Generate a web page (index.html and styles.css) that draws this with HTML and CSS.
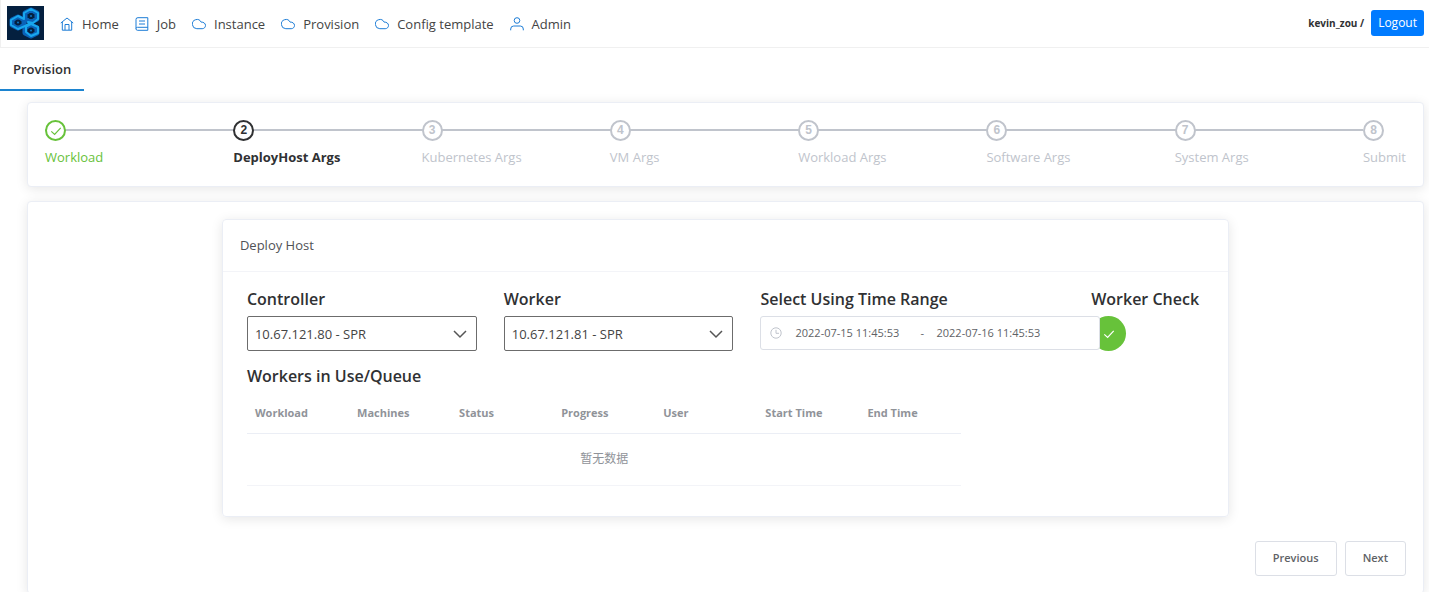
FILE: index.html
```html
<!DOCTYPE html>
<html lang="en">
<head>
<meta charset="utf-8">
<title>Provision</title>
<link rel="stylesheet" href="styles.css">
</head>
<body>
<svg class="defs" width="0" height="0" aria-hidden="true">
  <symbol id="cloud" viewBox="0 0 14 14"><path d="M4.800 11.700a4.600 4.600 0 1 1 4.300-6.600c2.400-.2 4.400 1.300 4.400 3.300 0 1.900-1.400 3.300-3.300 3.300z"/></symbol>
  <symbol id="tick" viewBox="0 0 14 14"><path d="M1.500 7.400 5.400 11 12.500 3.400"/></symbol>
</svg>
<header class="topbar">
  <a class="logo" href="#" aria-label="Start">
    <svg viewBox="0 0 37 34">
      <rect width="37" height="34" fill="#04203f"/>
      <g fill="none" stroke="#0a62b8" stroke-width="5" stroke-linejoin="round">
        <path d="M24 4l6 3v6l-6 3-6-3V7z"/><path d="M11 11l6 3v5l-6 3-6-3v-5z"/><path d="M24 19l6 3v5l-6 3-6-3v-5z"/>
      </g>
      <g fill="none" stroke="#18a8ee" stroke-width="2" stroke-linecap="round" stroke-linejoin="round">
        <path d="M17 12V7l7-4 7 4v6l-5 4-5-1"/><path d="M17 13l-6-3-7 4v5l7 4 7-3 5-3"/><path d="M19 20v6l5 4 7-3v-6l-7-3-4 2"/>
      </g>
      <g fill="#04203f"><circle cx="24" cy="10" r="3"/><circle cx="11" cy="16.500" r="3"/><circle cx="24" cy="24.500" r="3"/></g>
      <g fill="#0e77c4"><circle cx="24" cy="10" r="1"/><circle cx="11" cy="16.500" r="1"/><circle cx="24" cy="24.500" r="1"/></g>
    </svg>
  </a>
  <nav class="nav">
    <a href="#"><svg class="icon" viewBox="0 0 14 14"><path d="M.8 6 7 1l6.200 5M2.300 5v8.200h9.400V5M5 13V7.500h4V13"/></svg>Home</a>
    <a href="#"><svg class="icon" viewBox="0 0 14 14"><path d="M3 .7h9.800v12.600H2.500a1.500 1.500 0 0 1-1.500-1.500V2.500A1.800 1.800 0 0 1 3 .7zM1 11.500a1.500 1.500 0 0 1 1.500-1.200h10.300M4 4h6M4 7h6"/></svg>Job</a>
    <a href="#"><svg class="icon"><use href="#cloud"/></svg>Instance</a>
    <a href="#"><svg class="icon"><use href="#cloud"/></svg>Provision</a>
    <a href="#"><svg class="icon"><use href="#cloud"/></svg>Config template</a>
    <a href="#"><svg class="icon" viewBox="0 0 14 14"><circle cx="7" cy="3.500" r="2.800"/><path d="M.7 13.300V12a3 3 0 0 1 3-3h6.600a3 3 0 0 1 3 3v1.300"/></svg>Admin</a>
  </nav>
  <span class="user">kevin_zou /</span>
  <button class="logout" type="button">Logout</button>
</header>
<div class="tabs"><a class="tab" href="#">Provision</a></div>
<main class="content">
  <section class="panel">
    <ol class="steps">
      <li class="step done"><span class="dot"><svg class="tick"><use href="#tick"/></svg></span><span class="name">Workload</span></li>
      <li class="step current"><span class="dot">2</span><span class="name">DeployHost Args</span></li>
      <li class="step"><span class="dot">3</span><span class="name">Kubernetes Args</span></li>
      <li class="step"><span class="dot">4</span><span class="name">VM Args</span></li>
      <li class="step"><span class="dot">5</span><span class="name">Workload Args</span></li>
      <li class="step"><span class="dot">6</span><span class="name">Software Args</span></li>
      <li class="step"><span class="dot">7</span><span class="name">System Args</span></li>
      <li class="step"><span class="dot">8</span><span class="name">Submit</span></li>
    </ol>
  </section>
  <section class="panel main">
    <div class="card">
      <div class="card-head">Deploy Host</div>
      <div class="card-body">
        <div class="fields">
          <div class="field">
            <label for="controller">Controller</label>
            <div class="select"><select id="controller"><option>10.67.121.80 - SPR</option></select><svg class="chevron" viewBox="0 0 14 14"><path d="M1 4l6 6 6-6"/></svg></div>
          </div>
          <div class="field">
            <label for="worker">Worker</label>
            <div class="select"><select id="worker"><option>10.67.121.81 - SPR</option></select><svg class="chevron" viewBox="0 0 14 14"><path d="M1 4l6 6 6-6"/></svg></div>
          </div>
          <div class="field time">
            <label for="from">Select Using Time Range</label>
            <div class="range">
              <svg class="clock" viewBox="0 0 12 12"><circle cx="6" cy="6" r="5.200"/><path d="M6 2.800V6.300h3"/></svg>
              <input id="from" type="text" value="2022-07-15 11:45:53"><span>-</span><input type="text" aria-label="End of range" value="2022-07-16 11:45:53">
            </div>
          </div>
          <div class="field">
            <label for="check">Worker Check</label>
            <button class="check" id="check" type="button"><svg class="tick"><use href="#tick"/></svg></button>
          </div>
        </div>
        <h2>Workers in Use/Queue</h2>
        <table class="queue">
          <thead><tr><th>Workload</th><th>Machines</th><th>Status</th><th>Progress</th><th>User</th><th>Start Time</th><th>End Time</th></tr></thead>
          <tbody><tr><td colspan="7" lang="zh">暂无数据</td></tr></tbody>
        </table>
      </div>
    </div>
    <div class="actions"><button type="button">Previous</button><button type="button">Next</button></div>
  </section>
</main>
</body>
</html>
```
FILE: styles.css
```css
* { box-sizing: border-box; }
body {
  margin: 0;
  background: #fff;
  color: #303133;
  font: 13px/20px "Open Sans", "Noto Sans", "Noto Sans CJK SC", sans-serif;
}
a { color: inherit; text-decoration: none; }
button, input, select { font: inherit; color: inherit; }
svg { display: block; flex: none; fill: none; }
.defs { position: absolute; }

.topbar {
  display: flex;
  align-items: center;
  height: 48px;
  padding: 0 5px 2px 6px;
  border-bottom: 1px solid #f0f0f0;
  border-left: 1px solid #f0f0f0;
}
.logo svg { width: 37px; height: 34px; }
.nav { display: flex; flex: 1; gap: 16px; margin-left: 16px; color: #444; }
.nav a { display: flex; align-items: center; gap: 8px; padding-top: 2px; white-space: nowrap; }
.icon { width: 14px; height: 14px; stroke: #1c7cd6; stroke-width: 1; }
.user { font-size: 10px; font-weight: 700; }
.logout {
  height: 26px;
  margin-left: 7px;
  padding: 1px 7px 0;
  border: 0;
  border-radius: 3px;
  background: #007bff;
  color: #fff;
  font-size: 12px;
}

.tabs { display: flex; height: 43px; }
.tab {
  padding: 11px 13px;
  border-bottom: 2px solid #1c84d0;
  font-weight: 600;
}

.content { display: grid; gap: 14px; padding: 11px 5px 0 27px; }
.panel {
  padding: 17px;
  border: 1px solid #ebeef5;
  border-radius: 4px;
  background: #fff;
  box-shadow: 0 2px 12px rgba(0, 0, 0, .1);
}
.steps { display: flex; margin: 0; padding: 0 0 2px; list-style: none; }
.step { flex: 1; color: #c0c4cc; white-space: nowrap; }
.step:last-child { flex: none; }
.dot {
  display: flex;
  align-items: center;
  justify-content: center;
  width: 21px;
  height: 21px;
  border: 2px solid currentColor;
  border-radius: 50%;
  background: #fff;
  font: 700 12px/17px "Liberation Sans", sans-serif;
}
.step:not(:last-child) {
  background: linear-gradient(#c0c4cc, #c0c4cc) 0 9px / 100% 2px no-repeat;
}
.name { display: block; padding-top: 6px; }
.done { color: #67c23a; }
.current { color: #303133; }
.current .name { font-weight: 700; }
.tick { width: 12px; height: 12px; stroke: currentColor; stroke-width: 1.4; }

.card {
  width: 74%;
  margin: 0 auto;
  border: 1px solid #ebeef5;
  border-radius: 4px;
  box-shadow: 0 2px 12px rgba(0, 0, 0, .1);
}
.card-head { padding: 15px 17px 16px; border-bottom: 1px solid #f3f4f8; color: #505256; }
.card-body { padding: 15px 22px 30px 24px; }
.fields { display: grid; grid-template-columns: 230fr 230fr 304fr 115fr; gap: 27px; }
.field { min-width: 0; }
.field label, h2 {
  display: block;
  margin: 0;
  font-size: 16px;
  font-weight: 600;
  line-height: 24px;
  white-space: nowrap;
}
.field label { margin-bottom: 5px; }
.select { position: relative; }
.select select {
  appearance: none;
  display: block;
  width: 100%;
  height: 35px;
  padding: 0 7px;
  border: 1px solid #6c6c6c;
  border-radius: 2px;
  background: #fff;
  color: #444;
}
.chevron {
  position: absolute;
  top: 11px;
  right: 10px;
  width: 14px;
  height: 14px;
  stroke: #555;
  stroke-width: 1.5;
  pointer-events: none;
}
.time { z-index: 1; }
.range {
  display: flex;
  align-items: center;
  width: calc(100% + 36px);
  height: 34px;
  padding: 0 9px;
  border: 1px solid #dcdfe6;
  border-radius: 3px;
  background: #fff;
  color: #606266;
  font-size: 11px;
}
.range input { width: 125px; padding: 0; border: 0; background: none; }
.range span { width: 16px; }
.clock { width: 12px; height: 12px; margin-right: 13px; stroke: #c0c4cc; }
.check {
  display: grid;
  place-items: center;
  width: 35px;
  height: 35px;
  padding: 0;
  border: 0;
  border-radius: 50%;
  background: #67c23a;
  color: #fff;
}
h2 { padding-top: 13px; }
.queue {
  width: 74.5%;
  margin-top: 6px;
  border-collapse: collapse;
  table-layout: fixed;
  color: #909399;
}
.queue th {
  height: 39px;
  padding: 0 8px;
  border-bottom: 1px solid #ebeef5;
  font-size: 11px;
  font-weight: 700;
  text-align: left;
}
.queue td {
  height: 52px;
  padding: 0;
  border-bottom: 1px solid #f3f4f8;
  font-size: 12px;
  text-align: center;
}
.actions { display: flex; justify-content: flex-end; gap: 8px; padding-top: 24px; }
.actions button {
  height: 35px;
  padding: 0 17px;
  border: 1px solid #dcdfe6;
  border-radius: 3px;
  background: #fff;
  color: #606266;
  font-size: 11px;
  font-weight: 600;
}
```
